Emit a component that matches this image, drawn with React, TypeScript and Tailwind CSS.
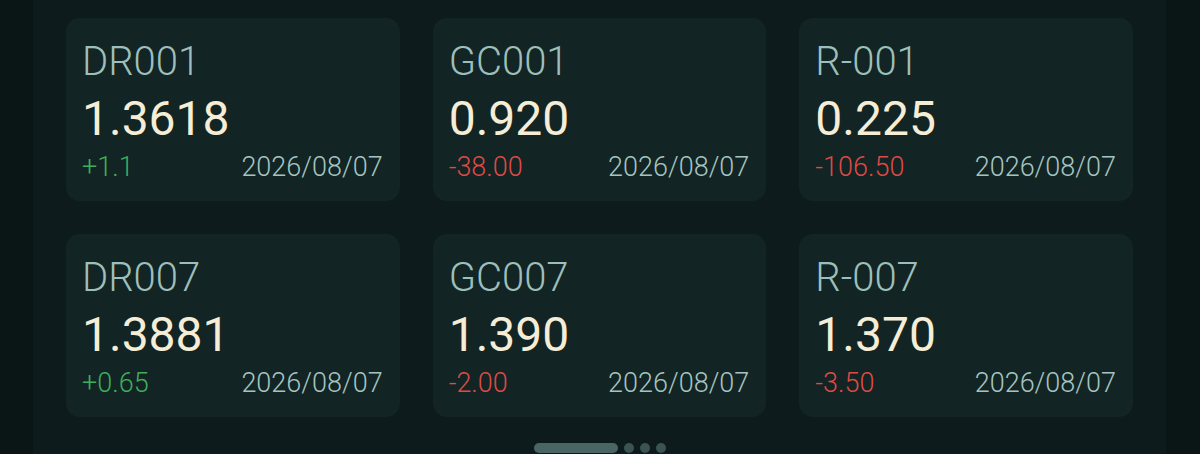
import React from "react";

type Item = { code: string; price: string; change: string; up: boolean; date: string };

const items: Item[] = [
  { code: "DR001", price: "1.3618", change: "+1.1", up: true, date: "2026/08/07" },
  { code: "GC001", price: "0.920", change: "-38.00", up: false, date: "2026/08/07" },
  { code: "R-001", price: "0.225", change: "-106.50", up: false, date: "2026/08/07" },
  { code: "DR007", price: "1.3881", change: "+0.65", up: true, date: "2026/08/07" },
  { code: "GC007", price: "1.390", change: "-2.00", up: false, date: "2026/08/07" },
  { code: "R-007", price: "1.370", change: "-3.50", up: false, date: "2026/08/07" },
];

function Card({ item }: { item: Item }) {
  return (
    <div className="h-[183px] rounded-[14px] bg-[#122423] pl-[16px] pr-[17px] pt-[24px] flex flex-col">
      <div className="text-[40px] leading-[40px] font-light text-[#9dbfbc]">{item.code}</div>
      <div className="mt-[13px] text-[48px] leading-[48px] font-normal text-[#f6edd6]">{item.price}</div>
      <div className="mt-[11px] flex items-center justify-between text-[27px] leading-[27px] font-light">
        <span className={item.up ? "text-[#3fae5c]" : "text-[#de4a45]"}>{item.change}</span>
        <span className="text-[#a5c4c1]">{item.date}</span>
      </div>
    </div>
  );
}

export default function App() {
  return (
    <div
      className="w-[1200px] h-[454px] overflow-hidden bg-[#0a1516] flex"
      style={{ fontFamily: "Roboto, 'Noto Sans', sans-serif" }}
    >
      <div className="ml-[33px] w-[1133px] h-full bg-[#0e1b1c] flex flex-col">
        <div className="pt-[18px] px-[33px] grid grid-cols-3 gap-x-[33px] gap-y-[33px]">
          {items.map((it) => (
            <Card key={it.code} item={it} />
          ))}
        </div>
        <div className="mt-[26px] flex items-center justify-center gap-[6px]">
          <div className="w-[84px] h-[10px] shrink-0 rounded-full bg-[#4a6664]" />
          <div className="w-[10px] h-[10px] shrink-0 rounded-full bg-[#3b5452]" />
          <div className="w-[10px] h-[10px] shrink-0 rounded-full bg-[#3b5452]" />
          <div className="w-[10px] h-[10px] shrink-0 rounded-full bg-[#3b5452]" />
        </div>
      </div>
    </div>
  );
}
